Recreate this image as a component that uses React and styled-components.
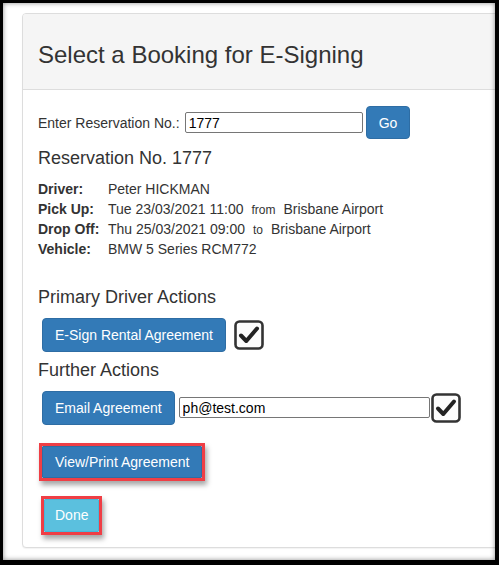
import styled, { createGlobalStyle } from 'styled-components';

const GlobalStyle = createGlobalStyle`
  html, body {
    margin: 0;
    padding: 0;
    background: #000;
  }
  body {
    font-family: "Liberation Sans", Arial, sans-serif;
    font-size: 14px;
    color: #333;
  }
`;

const details = [
  { label: 'Driver:', value: 'Peter HICKMAN' },
  { label: 'Pick Up:', value: 'Tue 23/03/2021 11:00', joiner: 'from', place: 'Brisbane Airport' },
  { label: 'Drop Off:', value: 'Thu 25/03/2021 09:00', joiner: 'to', place: 'Brisbane Airport' },
  { label: 'Vehicle:', value: 'BMW 5 Series RCM772' }
];

const Frame = styled.div`
  width: 499px;
  height: 565px;
  box-sizing: border-box;
  padding: 3px 4px 5px 3px;
  background: #000;
`;

const Screen = styled.div`
  position: relative;
  height: 100%;
  background: #fff;
  overflow: hidden;
  padding: 10px 0 0 19px;
  box-sizing: border-box;

  &::after {
    content: '';
    position: absolute;
    inset: 0;
    pointer-events: none;
    box-shadow: inset 0 0 5px rgba(0, 0, 0, 0.45);
  }
`;

const Panel = styled.div`
  width: 500px;
  border: 1px solid #ddd;
  border-radius: 4px;
  background: #fff;
  box-shadow: 0 1px 1px rgba(0, 0, 0, 0.05);
`;

const PanelHeading = styled.div`
  background: #f5f5f5;
  border-bottom: 1px solid #ddd;
  border-radius: 3px 3px 0 0;
  padding: 28px 15px 21px;
`;

const Title = styled.h3`
  margin: 0;
  font-size: 24px;
  font-weight: 400;
  line-height: 1.1;
  color: #333;
`;

const PanelBody = styled.div`
  padding: 16px 15px 12px;
  display: flex;
  flex-direction: column;
  align-items: flex-start;
`;

const Row = styled.div`
  display: flex;
  align-items: center;
  gap: ${({ gap }) => gap || 0}px;
  margin-left: ${({ indent }) => indent || 0}px;
  margin-top: ${({ top }) => top || 0}px;
`;

const Label = styled.label`
  line-height: 20px;
  margin-right: 5px;
`;

const TextInput = styled.input`
  box-sizing: border-box;
  width: ${({ w }) => w}px;
  height: 21px;
  border: 1px solid #767676;
  border-radius: 2px;
  padding: 1px 3px;
  font-family: "Liberation Sans", Arial, sans-serif;
  font-size: 14px;
  color: #000;
  background: #fff;
  outline: none;
`;

const Button = styled.button`
  box-sizing: border-box;
  height: ${({ h }) => h || 33}px;
  padding: 0 12px;
  font-family: "Liberation Sans", Arial, sans-serif;
  font-size: 14px;
  line-height: 1;
  color: #fff;
  border: 1px solid ${({ info }) => (info ? '#46b8da' : '#2e6da4')};
  background: ${({ info }) => (info ? '#5bc0de' : '#337ab7')};
  border-radius: ${({ square }) => (square ? '1px' : '4px')};
  cursor: pointer;
`;

const SubHeading = styled.h4`
  margin: ${({ top }) => top}px 0 0;
  font-size: 18px;
  font-weight: 400;
  line-height: 1.1;
  color: #333;
`;

const DetailList = styled.div`
  margin-top: 10px;
  display: grid;
  grid-template-columns: 70px auto;
  line-height: 20px;
`;

const DetailLabel = styled.span`
  font-weight: 700;
`;

const Joiner = styled.span`
  font-size: 12px;
  line-height: 12px;
  margin: 0 8px;
`;

const Highlight = styled.div`
  margin-top: ${({ top }) => top}px;
  margin-left: ${({ indent }) => indent}px;
  border: 3px solid #ef3e45;
  box-shadow: 2px 4px 5px rgba(0, 0, 0, 0.35);
  display: flex;
`;

const CheckBox = () => (
  <svg width="30" height="30" viewBox="0 0 30 30">
    <rect x="1.5" y="1.5" width="27" height="27" rx="4" fill="#fcfcfc" stroke="#333" strokeWidth="2.6" />
    <path d="M7 15.5 L12.3 21 L23 8.5" fill="none" stroke="#222" strokeWidth="4" strokeLinecap="round" strokeLinejoin="round" />
  </svg>
);

export default function App() {
  return (
    <>
      <GlobalStyle />
      <Frame>
        <Screen>
          <Panel>
            <PanelHeading>
              <Title>Select a Booking for E-Signing</Title>
            </PanelHeading>
            <PanelBody>
              <Row>
                <Label>Enter Reservation No.:</Label>
                <TextInput w={178} defaultValue="1777" />
                <Button h={33} style={{ marginLeft: 3 }}>Go</Button>
              </Row>
              <SubHeading top={10}>Reservation No. 1777</SubHeading>
              <DetailList>
                {details.map((d) => (
                  <>
                    <DetailLabel key={d.label}>{d.label}</DetailLabel>
                    <span>
                      {d.value}
                      {d.joiner && <Joiner>{d.joiner}</Joiner>}
                      {d.place}
                    </span>
                  </>
                ))}
              </DetailList>
              <SubHeading top={29}>Primary Driver Actions</SubHeading>
              <Row indent={4} top={10} gap={8}>
                <Button h={34}>E-Sign Rental Agreement</Button>
                <CheckBox />
              </Row>
              <SubHeading top={9}>Further Actions</SubHeading>
              <Row indent={4} top={10}>
                <Button h={34}>Email Agreement</Button>
                <TextInput w={251} defaultValue="ph@test.com" style={{ marginLeft: 4, marginRight: 1 }} />
                <CheckBox />
              </Row>
              <Highlight top={18} indent={1}>
                <Button h={32} square>View/Print Agreement</Button>
              </Highlight>
              <Highlight top={15} indent={3}>
                <Button h={33} info square style={{ padding: '0 10px' }}>Done</Button>
              </Highlight>
            </PanelBody>
          </Panel>
        </Screen>
      </Frame>
    </>
  );
}
